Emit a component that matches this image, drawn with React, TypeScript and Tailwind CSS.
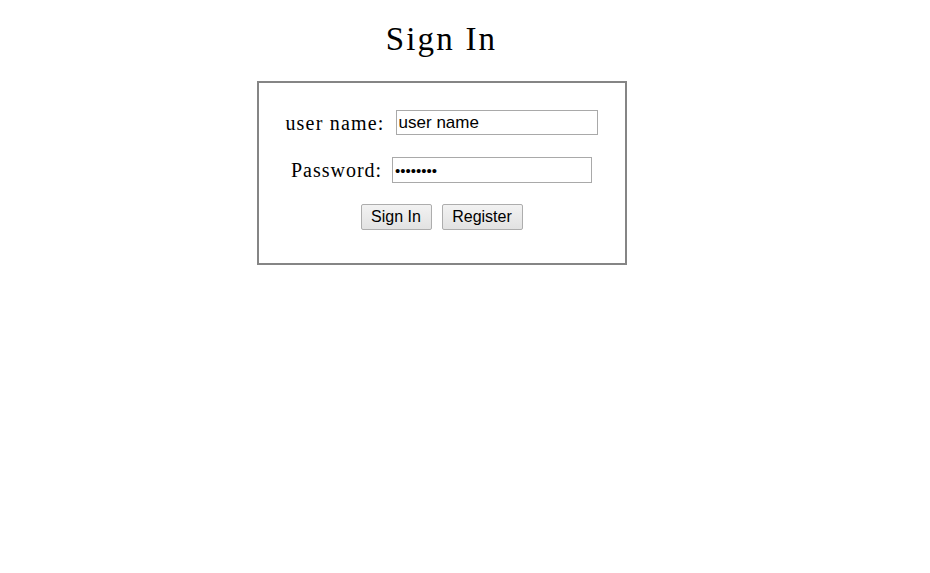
import React from "react";

export default function App() {
  return (
    <div className="w-[930px] h-[573px] bg-white">
      <div className="w-[883px] flex flex-col items-center">
        <h1 className="mt-[19px] h-[40px] leading-[40px] text-[33px] tracking-[2.2px] text-black font-['Liberation_Serif',serif]">
          Sign In
        </h1>
        <div className="mt-[22px] w-[370px] h-[184px] border-2 border-[#858585] flex flex-col items-center pt-[27px]">
          <div className="flex items-center h-[25px]">
            <span className="text-[20px] leading-[24px] tracking-[1.2px] text-black mr-[11px] font-['Liberation_Serif',serif]">
              user name:
            </span>
            <input
              defaultValue="user name"
              className="w-[202px] h-[25px] border border-[#a9a9a9] px-[2px] text-[17px] text-black outline-none font-['Liberation_Sans',Arial,sans-serif]"
            />
          </div>
          <div className="flex items-center h-[26px] mt-[22px]">
            <span className="text-[20px] leading-[24px] tracking-[1px] text-black mr-[10px] font-['Liberation_Serif',serif]">
              Password:
            </span>
            <input
              type="password"
              defaultValue="12345678"
              className="w-[200px] h-[26px] border border-[#a9a9a9] px-[2px] text-[15px] text-black outline-none font-['Liberation_Sans',Arial,sans-serif]"
            />
          </div>
          <div className="flex items-center gap-[10px] mt-[21px]">
            <button className="w-[71px] h-[26px] border border-[#adadad] rounded-[2px] bg-gradient-to-b from-[#f2f2f2] to-[#e2e2e2] text-[16px] text-black font-['Liberation_Sans',Arial,sans-serif]">
              Sign In
            </button>
            <button className="w-[81px] h-[26px] border border-[#adadad] rounded-[2px] bg-gradient-to-b from-[#f2f2f2] to-[#e2e2e2] text-[16px] text-black font-['Liberation_Sans',Arial,sans-serif]">
              Register
            </button>
          </div>
        </div>
      </div>
    </div>
  );
}
